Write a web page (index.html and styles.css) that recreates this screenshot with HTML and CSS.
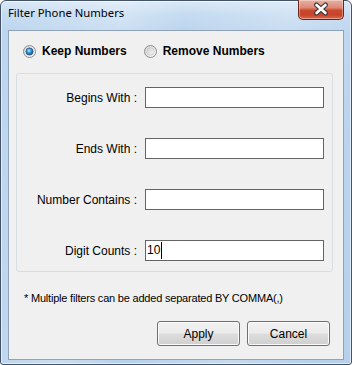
FILE: index.html
```html
<!DOCTYPE html>
<html>
<head>
<meta charset="utf-8">
<link rel="stylesheet" href="styles.css">
</head>
<body>
<div class="window">
  <div class="titlebar">
    <span class="title">Filter Phone Numbers</span>
    <button class="close" aria-label="Close">
      <svg width="44" height="19" viewBox="0 0 44 19">
        <path d="M17.5 5 L26.5 13 M26.5 5 L17.5 13" stroke="#3b3b3b" stroke-width="5" stroke-linecap="round" fill="none"/>
        <path d="M17.5 5 L26.5 13 M26.5 5 L17.5 13" stroke="#ffffff" stroke-width="2.6" stroke-linecap="round" fill="none"/>
      </svg>
    </button>
  </div>
  <div class="client">
    <div class="modes">
      <label class="mode">
        <svg class="radio" width="13" height="13" viewBox="0 0 13 13">
          <defs>
            <linearGradient id="ring1" x1="0" y1="0" x2="1" y2="1"><stop offset="0" stop-color="#d4d4d4"/><stop offset="1" stop-color="#fbfbfb"/></linearGradient>
            <radialGradient id="dot1" cx="42%" cy="38%" r="70%"><stop offset="0" stop-color="#b8e6ff"/><stop offset=".45" stop-color="#2c93dc"/><stop offset="1" stop-color="#0b4a86"/></radialGradient>
          </defs>
          <circle cx="6.5" cy="6.5" r="6" fill="url(#ring1)" stroke="#8b8d8e"/>
          <circle cx="6.5" cy="6.5" r="3.6" fill="url(#dot1)" stroke="#1b4c7a" stroke-width=".7"/>
        </svg>
        Keep Numbers
      </label>
      <label class="mode">
        <svg class="radio" width="13" height="13" viewBox="0 0 13 13">
          <defs>
            <linearGradient id="ring2" x1="0" y1="0" x2="1" y2="1"><stop offset="0" stop-color="#d4d4d4"/><stop offset="1" stop-color="#fbfbfb"/></linearGradient>
            <linearGradient id="in2" x1="0" y1="0" x2="1" y2="1"><stop offset="0" stop-color="#cfcfcf"/><stop offset="1" stop-color="#f6f6f6"/></linearGradient>
          </defs>
          <circle cx="6.5" cy="6.5" r="6" fill="url(#ring2)" stroke="#8b8d8e"/>
          <circle cx="6.5" cy="6.5" r="3.8" fill="url(#in2)" stroke="#c2c2c2" stroke-width=".6"/>
        </svg>
        Remove Numbers
      </label>
    </div>
    <div class="group">
      <label class="lbl">Begins With :</label>
      <input class="field" type="text">
      <label class="lbl">Ends With :</label>
      <input class="field" type="text">
      <label class="lbl">Number Contains :</label>
      <input class="field" type="text">
      <label class="lbl">Digit Counts :</label>
      <div class="field filled">10<span class="caret"></span></div>
    </div>
    <p class="note">* Multiple filters can be added separated BY COMMA(,)</p>
    <div class="actions">
      <button class="btn">Apply</button>
      <button class="btn">Cancel</button>
    </div>
  </div>
</div>
</body>
</html>
```
FILE: styles.css
```css
html, body {
  margin: 0;
  padding: 0;
}
body {
  width: 352px;
  height: 365px;
  overflow: hidden;
  background: #ffffff;
  font-family: "Liberation Sans", Arial, sans-serif;
}
.window {
  box-sizing: border-box;
  width: 352px;
  height: 365px;
  border: 1px solid #43536a;
  border-radius: 6px 6px 3px 3px;
  background:
    linear-gradient(100deg, rgba(255,255,255,0) 0%, rgba(255,255,255,.25) 30%, rgba(255,255,255,0) 45%, rgba(255,255,255,.2) 70%, rgba(255,255,255,0) 90%),
    linear-gradient(180deg, #d9e8f6 0px, #c5dbf1 14px, #bcd5ee 29px, #b7d1ec 100%);
  box-shadow: inset 0 0 0 1px rgba(255,255,255,.55);
  display: flex;
  flex-direction: column;
  padding: 0 7px 4px 7px;
}
.titlebar {
  height: 29px;
  flex: none;
  display: flex;
  justify-content: space-between;
  align-items: flex-start;
}
.title {
  font-family: "Noto Sans", "Open Sans", sans-serif;
  font-size: 11.3px;
  line-height: 16px;
  color: #000;
  padding-top: 4px;
}
.close {
  box-sizing: border-box;
  width: 46px;
  height: 20px;
  margin-top: -1px;
  padding: 0;
  border: 1px solid #6b2418;
  border-top: none;
  border-radius: 0 0 5px 5px;
  background: linear-gradient(180deg, #eab0a2 0%, #dc8a76 40%, #c9482e 55%, #c8442a 80%, #d9704f 100%);
  box-shadow: inset 0 0 0 1px rgba(255,255,255,.35);
  display: flex;
  align-items: center;
  justify-content: center;
}
.close svg {
  display: block;
}
.client {
  flex: 1;
  border: 1px solid #8ea2b8;
  background: #f0f0f0;
  display: flex;
  flex-direction: column;
  align-items: flex-start;
}
.modes {
  display: flex;
  gap: 17px;
  padding: 14px 0 0 14px;
  height: 13px;
}
.mode {
  display: flex;
  align-items: center;
  gap: 6px;
  font-weight: bold;
  font-size: 12px;
  line-height: 13px;
  color: #000;
}
.radio {
  display: block;
  flex: none;
}
.group {
  box-sizing: border-box;
  width: 317px;
  margin: 15px 0 0 7px;
  border: 1px solid #d5dfe5;
  border-radius: 3px;
  padding: 13px 8px 10px 0;
  display: grid;
  grid-template-columns: 120px 179px;
  column-gap: 8px;
  row-gap: 30px;
  align-items: center;
}
.lbl {
  text-align: right;
  font-size: 12px;
  line-height: 14px;
  color: #000;
}
.field {
  box-sizing: border-box;
  width: 179px;
  height: 21px;
  margin: 0;
  border: 1px solid #646464;
  background: #fff;
  padding: 0 1px;
  font-family: "Liberation Sans", Arial, sans-serif;
  font-size: 12px;
  color: #000;
  outline: none;
}
.filled {
  line-height: 17px;
  display: flex;
  align-items: center;
}
.caret {
  display: inline-block;
  width: 1px;
  height: 17px;
  margin-left: 1px;
  background: #000;
}
.note {
  margin: 20px 0 0 15px;
  font-size: 11px;
  letter-spacing: -0.2px;
  line-height: 13px;
  color: #000;
}
.actions {
  align-self: stretch;
  display: flex;
  justify-content: flex-end;
  gap: 7px;
  margin-top: 16px;
  padding-right: 13px;
}
.btn {
  box-sizing: border-box;
  width: 83px;
  height: 25px;
  border: 1px solid #707070;
  border-radius: 3px;
  background: linear-gradient(180deg, #f2f2f2 0%, #ebebeb 48%, #dddddd 52%, #cfcfcf 100%);
  box-shadow: inset 0 0 0 1px #fbfbfb;
  font-family: "Liberation Sans", Arial, sans-serif;
  font-size: 12px;
  color: #000;
  padding: 0;
}
```
